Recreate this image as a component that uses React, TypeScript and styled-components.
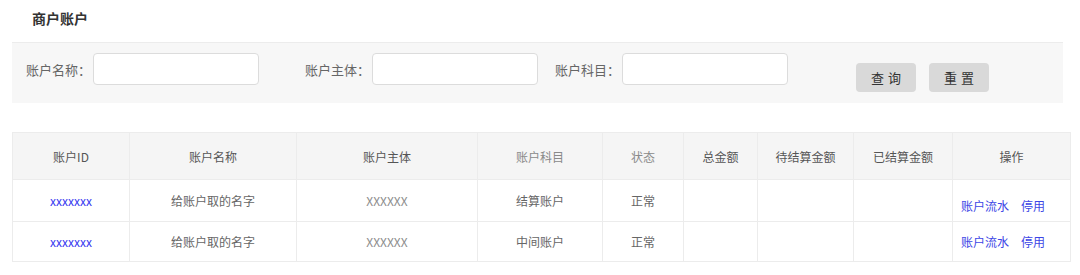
import React from "react";
import styled, { createGlobalStyle } from "styled-components";

const GlobalStyle = createGlobalStyle`
  html, body {
    margin: 0;
    padding: 0;
    background: #fff;
  }
  body {
    font-family: "Noto Sans CJK SC", "Liberation Sans", sans-serif;
    color: #666;
  }
`;

const Page = styled.div`
  width: 1080px;
  padding: 0 12px;
  box-sizing: border-box;
`;

const Title = styled.h2`
  margin: 0;
  height: 42px;
  line-height: 36px;
  padding-left: 20px;
  font-size: 14px;
  font-weight: bold;
  color: #333;
`;

const FilterBar = styled.div`
  width: 1051px;
  height: 61px;
  box-sizing: border-box;
  border-top: 1px solid #ececec;
  background: #f7f7f7;
  display: flex;
  align-items: flex-start;
  padding: 10px 0 0 14px;
`;

const FilterItem = styled.div<{ $width: number }>`
  width: ${(p) => p.$width}px;
  display: flex;
  align-items: center;
  flex-shrink: 0;
`;

const Label = styled.label`
  width: 67px;
  font-size: 13px;
  color: #666;
  white-space: nowrap;
`;

const Input = styled.input`
  width: 166px;
  height: 32px;
  box-sizing: border-box;
  border: 1px solid #dcdcdc;
  border-radius: 4px;
  background: #fff;
  outline: none;
  padding: 0 8px;
`;

const Buttons = styled.div`
  display: flex;
  gap: 13px;
  margin-top: 10px;
`;

const Button = styled.button`
  width: 60px;
  height: 29px;
  border: none;
  border-radius: 4px;
  background: #d9d9d9;
  color: #333;
  font-family: inherit;
  font-size: 13px;
  letter-spacing: 4px;
  text-indent: 4px;
  padding: 0;
  cursor: pointer;
`;

const Table = styled.table`
  margin-top: 29px;
  width: 1058px;
  border-collapse: collapse;
  table-layout: fixed;
  font-size: 12px;
  border: 1px solid #ececec;
`;

const HeadCell = styled.th<{ $muted?: boolean }>`
  height: 46px;
  padding: 0;
  background: #f5f5f5;
  border: 1px solid #ececec;
  font-weight: normal;
  color: ${(p) => (p.$muted ? "#8a8a8a" : "#555")};
  text-align: center;
`;

const Row = styled.tr<{ $height: number }>`
  height: ${(p) => p.$height}px;
`;

const Cell = styled.td<{ $tone?: "link" | "light" }>`
  padding: 0;
  border: 1px solid #ececec;
  text-align: center;
  color: ${(p) =>
    p.$tone === "link" ? "#3a3af0" : p.$tone === "light" ? "#8c8c8c" : "#666"};
`;

const ActionCell = styled.td<{ $drop?: boolean }>`
  padding: ${(p) => (p.$drop ? "10px 0 0 8px" : "0 0 0 8px")};
  border: 1px solid #ececec;
  text-align: left;
`;

const ActionLink = styled.a`
  color: #3d46e6;
  text-decoration: none;
  margin-right: 12px;
  cursor: pointer;
`;

const columns = [
  { title: "账户ID", width: 117 },
  { title: "账户名称", width: 167 },
  { title: "账户主体", width: 181 },
  { title: "账户科目", width: 125, muted: true },
  { title: "状态", width: 81, muted: true },
  { title: "总金额", width: 74 },
  { title: "待结算金额", width: 96 },
  { title: "已结算金额", width: 99 },
  { title: "操作", width: 118 },
];

const rows = [
  { id: "xxxxxxx", name: "给账户取的名字", owner: "XXXXXX", subject: "结算账户", status: "正常", height: 42, drop: true },
  { id: "xxxxxxx", name: "给账户取的名字", owner: "XXXXXX", subject: "中间账户", status: "正常", height: 40, drop: false },
];

export default function App() {
  return (
    <>
      <GlobalStyle />
      <Page>
        <Title>商户账户</Title>
        <FilterBar>
          <FilterItem $width={279}>
            <Label>账户名称：</Label>
            <Input />
          </FilterItem>
          <FilterItem $width={250}>
            <Label>账户主体：</Label>
            <Input />
          </FilterItem>
          <FilterItem $width={301}>
            <Label>账户科目：</Label>
            <Input />
          </FilterItem>
          <Buttons>
            <Button>查询</Button>
            <Button>重置</Button>
          </Buttons>
        </FilterBar>

        <Table>
          <colgroup>
            {columns.map((c) => (
              <col key={c.title} style={{ width: c.width }} />
            ))}
          </colgroup>
          <thead>
            <tr>
              {columns.map((c) => (
                <HeadCell key={c.title} $muted={c.muted}>
                  {c.title}
                </HeadCell>
              ))}
            </tr>
          </thead>
          <tbody>
            {rows.map((r, i) => (
              <Row key={i} $height={r.height}>
                <Cell $tone="link">{r.id}</Cell>
                <Cell>{r.name}</Cell>
                <Cell $tone="light">{r.owner}</Cell>
                <Cell>{r.subject}</Cell>
                <Cell>{r.status}</Cell>
                <Cell />
                <Cell />
                <Cell />
                <ActionCell $drop={r.drop}>
                  <ActionLink>账户流水</ActionLink>
                  <ActionLink>停用</ActionLink>
                </ActionCell>
              </Row>
            ))}
          </tbody>
        </Table>
      </Page>
    </>
  );
}
